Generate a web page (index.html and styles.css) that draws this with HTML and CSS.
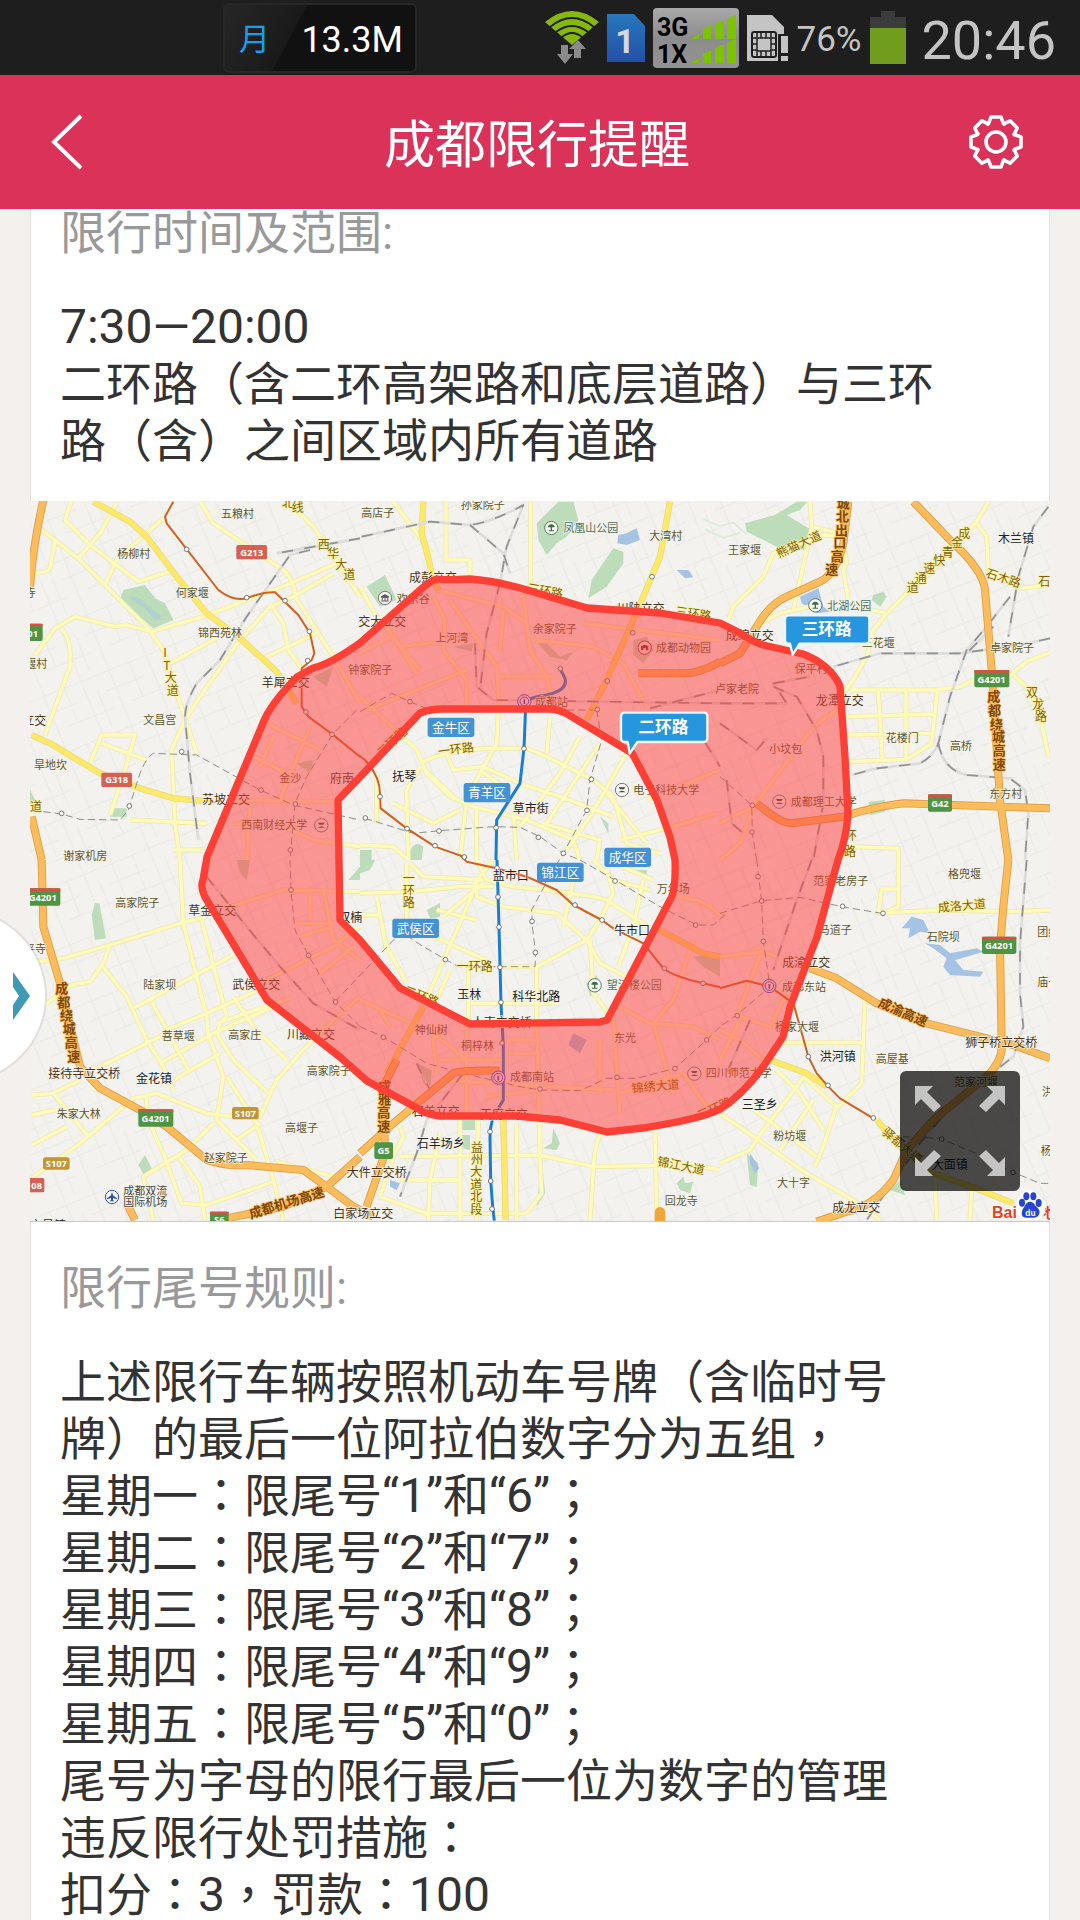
FILE: index.html
```html
<!DOCTYPE html>
<html lang="zh-CN">
<head>
<meta charset="utf-8">
<meta name="viewport" content="width=device-width, initial-scale=1">
<title>成都限行提醒</title>
<link rel="stylesheet" href="styles.css">
</head>
<body>
<div class="app">
  <div class="status">
    <div class="traffic"><span class="traffic-unit">月</span><span>13.3M</span></div>
    <div class="status-icons">
      <svg width="54" height="54" viewBox="0 0 54 54" aria-hidden="true">
        <path d="M27 34 L0 11 Q27 -11 54 11Z" fill="#86b80d"/>
        <g fill="none" stroke="#1e1e1e" stroke-width="2"><path d="M5 16Q27 -2 49 16M11 21Q27 9 43 21M17 26Q27 18 37 26"/></g>
        <path d="M16 34h7v9h5l-8 10-8-10h4zM29 47v-9h-5l9-9 8 9h-5v9z" fill="#8b8b8b"/>
      </svg>
      <svg width="38" height="50" viewBox="0 0 38 50" aria-hidden="true">
        <defs><linearGradient id="sim" x2="0" y2="1"><stop stop-color="#2777bb"/><stop offset="1" stop-color="#2450a8"/></linearGradient></defs>
        <path d="M0 1h27l11 12v36H0z" fill="url(#sim)"/>
        <text x="18" y="40" class="sim-no">1</text>
      </svg>
      <svg width="86" height="60" viewBox="0 0 86 60" aria-hidden="true">
        <defs><linearGradient id="sig" x2="0" y2="1"><stop stop-color="#a9a9a9"/><stop offset=".5" stop-color="#8c8c8c"/><stop offset="1" stop-color="#939393"/></linearGradient></defs>
        <rect width="86" height="60" rx="4" fill="url(#sig)"/>
        <text x="4" y="28" class="net">3G</text><text x="4" y="55" class="net">1X</text>
        <path d="M38 31l8-5v5zM50 31v-10l8-4v14zM62 31V16l9-4v19zM74 31V11l9-4v24zM38 55l8-5v5zM50 55v-9l8-4v13zM62 55V40l9-4v19zM74 55V35l9-4v24z" fill="#7cc400"/>
      </svg>
      <svg width="42" height="48" viewBox="0 0 42 48" aria-hidden="true">
        <path d="M0 1h25l12 12v7h-6v27H0z" fill="#c4c4c4"/>
        <rect x="5" y="18" width="24" height="25" rx="2" fill="#c4c4c4" stroke="#1e1e1e" stroke-width="2"/>
        <path d="M10 18v25M24 18v25M5 24h5M5 30h5M5 36h5M24 24h5M24 30h5M24 36h5M10 24h14M10 37h14M14 18v6M19 18v6M14 37v6M19 37v6" stroke="#1e1e1e" stroke-width="1.5" fill="none"/>
        <path d="M34 22h7v17h-7zM34 42h7v5h-7z" fill="#c4c4c4"/>
      </svg>
      <span class="percent">76%</span>
      <svg width="36" height="53" viewBox="0 0 36 53" aria-hidden="true"><path d="M0 6h11V0h14v6h11v12H0z" fill="#3b3b3b"/><path d="M0 17h36v36H0z" fill="#709d1d"/></svg>
      <time class="clock">20:46</time>
    </div>
  </div>

  <header class="bar">
    <button class="bar-btn" aria-label="返回"><svg width="34" height="58" viewBox="0 0 34 58"><path d="M31 3 4 29l27 26" fill="none" stroke="#fff" stroke-width="4"/></svg></button>
    <h1>成都限行提醒</h1>
    <button class="bar-btn bar-right" aria-label="设置"><svg width="56" height="56" viewBox="-28 -28 56 56"><g fill="none" stroke="#fff" stroke-width="3.6" stroke-linejoin="round"><path d="M-7-19.5-5-25H5L7-19.5Q8-16.500 8.800-18.700L14.100-21.200 21.200-14.100 18.700-8.800Q17-7 19.500-7L25-5V5L19.500 7Q17 8 18.700 8.800L21.200 14.100 14.100 21.200 8.800 18.700Q8 16.500 7 19.500L5 25H-5L-7 19.500Q-8 16.500-8.800 18.700L-14.100 21.200-21.200 14.100-18.700 8.800Q-17 7-19.500 7L-25 5V-5L-19.500-7Q-17-8-18.700-8.800L-21.200-14.100-14.100-21.200-8.800-18.700Q-8-16.500-7-19.500Z"/><circle r="10"/></g></svg></button>
  </header>

  <main class="scroll">
    <article class="card">
      <section class="block">
        <h2>限行时间及范围:</h2>
        <p><span class="num">7:30—20:00</span><br>二环路（含二环高架路和底层道路）与三环<br>路（含）之间区域内所有道路</p>
      </section>

      <figure class="map">
        <svg class="map-art" viewBox="0 0 3060 2160" role="img" aria-label="成都限行区域地图">
          <defs>
            <pattern id="streets" width="210" height="180" patternUnits="userSpaceOnUse" patternTransform="rotate(-22)">
              <path d="M0 20H210M0 75H120M60 130H210M30 0V180M95 20V130M150 0V180M185 60V180" fill="none" stroke="#ebebe8" stroke-width="4"/>
            </pattern>
            <g id="minor">
              <g transform="translate(-90 -33)"><path d="M120 115L240 210 440 410 490 480 530 610 590 790M215 30L195 90 270 165 415 275 510 245M350 40L300 130 235 205M490 85L350 210 315 285M165 155L150 235Q145 250 95 250M105 495L165 415 225 380 345 410 380 405 455 425 610 380 860 285 1010 220M185 420Q215 440 210 530L135 735M600 35L640 100 850 240Q885 270 885 320L1000 500 1080 640M890 60L940 110 1080 320M510 520L650 445M1000 250L880 320 810 350 720 450 600 620 555 690 515 780 525 1000 540 1110M790 505L950 430M810 340L850 400 865 480 905 535M270 820L305 735H405L375 840 330 975M305 760L440 810M390 990L620 1000M520 1080H610M800 700L960 780M930 710L840 930M760 800L860 850M820 740L780 830M690 930L1000 935M700 1000L850 1010 940 1050 1080 1070M750 950L740 1110"/></g>
              <g transform="translate(990 -33)"><path d="M0 290L50 380 180 540M100 35L215 190M258 35V210H330V260M512 35V290M230 300L430 350 500 400M490 310L500 400 510 480 560 560 580 650M430 360L420 480M220 320L255 390 250 480 320 570V650M270 330L310 390 410 530 418 650M120 470L250 455M60 380L170 550M0 490L110 430M415 560H580M520 450L700 470 790 520 860 650M670 400L1080 450M20 660L320 540M180 820Q250 780 400 775H500L560 800 700 870 760 920 800 1060M0 620L170 780 200 850 270 920 340 950 500 990 640 1050 660 1110M415 660L410 760 370 830 320 930 300 1110M180 830L140 900 145 1110M260 790L280 840 370 830 480 880 600 920 760 980M570 680L560 790M660 740L600 850 480 1010M720 760L640 880 560 1000M800 790L690 980 620 1080M360 840L440 900M460 960L470 1110M740 910L860 1060M350 950V1110M0 1065L100 1070 145 1110M100 940L220 1000 300 960M780 1050L940 1010 1070 970M860 930L1080 840M550 1000L720 1050 710 1110M800 1060L900 1090M185 830L290 930M50 860V1000"/></g>
              <g transform="translate(2070 -33)"><path d="M270 35L275 110 380 135M25 390L40 350 130 260 160 190 210 170 310 135 380 140M275 115L220 360M370 150L380 220 370 240 385 330M100 410L180 370 270 350M385 345L500 370 460 420 440 500 400 570 370 610M500 370L560 310 640 240 710 160 770 95 805 35M770 100L800 140 805 240 900 295 990 285M390 600H650L720 590 760 570M475 605L487 810M558 600V805M652 600L635 760 560 808 390 815M380 680L640 672M380 735L635 730M870 555L920 515 990 488M880 555L930 600 960 670 985 800M400 1070L535 1075V1110M365 650L280 710 100 950 0 1000M0 1110L60 1060 100 950"/></g>
              <g transform="translate(-90 1077)"><path d="M115 305L190 295 330 255 540 190 620 170M140 430L215 375 270 365 310 310 330 255M305 315L380 410 440 540 490 620 520 690M540 0L550 190 620 470 625 520 670 650 650 780 770 900M605 180L680 470M400 445L700 285M455 425L565 630M500 510L620 460 800 380M650 490L870 415M480 610L640 520 820 440M230 640L300 620 440 550 500 520M520 660L660 580M700 410L760 500 860 600M680 470Q650 490 655 530L700 600 810 705M95 705L160 700 240 660M95 765L165 750M160 700L265 830M95 855L200 800M100 950L240 850 400 715 470 700 620 760 700 770H780L830 660 900 580 1000 480 1080 410M440 700V770L490 880 545 1030 620 1035 820 965M530 880L600 980 615 1080M640 790L560 870 430 950 460 1080M680 650L770 790 820 960 850 1080M710 840L780 790M830 905L1000 950M690 140L850 90 1080 95M800 360L1000 260 1080 200M930 90V180M970 90L1000 240M890 190H1000M1000 240L1080 300M900 230L1000 200M960 340L1060 260"/></g>
              <g transform="translate(990 1077)"><path d="M0 100L150 95 300 80 400 80M140 10V180M150 10L190 50 370 60M400 0L350 60 330 120 190 440M0 165H60L80 260 140 370M50 110L80 270M250 170L370 70M180 210L290 260 380 300M230 150L350 180M350 0L380 60 460 80 560 90 700 110 740 120 880 210M350 60V110L430 140 590 160 680 240 720 310 800 350M740 20L760 100 720 180 680 240 530 320H430M700 0L760 60 870 90M740 0L880 60M850 60L820 200 775 320M690 240L700 400 760 480 780 760M640 60L610 200M530 320V480L540 870M330 430H600M325 320V490M270 330L230 420M215 500L230 640M320 500V760M440 540H540M440 580H540M240 600H440M240 660L760 690M780 700L970 640 1040 740M880 490L940 700M760 430L870 490 1000 500 1080 540M1000 240L940 420 880 490M950 110Q1050 120 1080 170M720 700V540M0 420L220 520 320 600M60 450L90 500M120 890L540 885 700 920 1000 915 1080 930M720 820Q700 880 700 930L690 1080M885 815L890 1050M240 820L210 960 205 1080M300 780V1080M355 780L350 1080M470 790V1080M540 780V900L545 1000 500 1060M60 1010L200 1060H500M120 800L130 830 100 890 60 1010M380 710L540 690M120 960H300"/></g>
              <g transform="translate(2070 1077)"><path d="M535 0V140L500 155M530 87H485L475 160 660 150 880 155 990 150M435 420L425 670 345 750 310 860 285 920M190 548H435M0 760L260 940 400 1020 480 1080M0 910L90 870 130 810 200 720 260 640M90 740L290 890M170 630L240 700 310 810M250 650L350 740M180 870L280 720M645 950L650 1080M755 980L750 1080M0 510L60 540 130 600M130 260L50 470M0 290L130 275 200 300M60 470L150 500 200 400M0 600L60 480"/></g>
            </g>
            <g id="major">
              <g transform="translate(-90 -33)"><path d="M280 35L390 95 440 140 530 260 620 370 720 445 830 545 890 640M95 735L150 760 300 850 420 895 520 925 640 935"/></g>
              <g transform="translate(990 -33)"><path d="M190 35L185 130Q205 200 215 250L235 300M930 35L900 200 820 390 740 570 680 690"/></g>
              <g transform="translate(990 1077)"><path d="M430 780L437 1080M190 440L80 640M880 200L1030 280 1080 290"/></g>
              <g transform="translate(2070 1077)"><path d="M150 600L260 640 320 680M470 780L560 880 640 940 780 990 880 1030"/></g>
            </g>
            <g id="highway">
              <g transform="translate(-90 -33)"><path d="M130 30Q100 160 90 290M95 980L125 1110"/></g>
              <g transform="translate(990 -33)"><path d="M835 550H990Q1040 540 1080 515"/></g>
              <g transform="translate(2070 -33)"><path d="M385 35L370 160Q350 250 300 275L200 320Q150 340 110 410L60 490 0 520M580 35L690 150Q790 240 795 300L815 540 840 930 865 1110M110 940Q180 1000 215 1000L370 980Q460 950 550 940L990 955"/></g>
              <g transform="translate(-90 1077)"><path d="M125 0L130 200 180 370 240 620 300 685 420 750 500 800 620 900Q680 920 740 915L910 930 980 980 1060 1040 1120 1070M1080 890L980 980 850 1040 680 1075M385 1040L405 1080"/></g>
              <g transform="translate(990 1077)"><path d="M0 880L100 790 280 640Q300 630 420 632M110 600L70 680 75 880 20 1040"/></g>
              <g transform="translate(2070 1077)"><path d="M865 0L850 140 840 260 845 550Q850 600 800 650L640 780 560 870 520 960Q460 1040 380 1055L290 1085M270 325L350 355 470 430 620 490 740 520 880 555 990 595"/></g>
            </g>
            <g id="rail">
              <g transform="translate(-90 -33)"><path d="M1080 145L830 190M930 180L870 195 740 380 660 510 590 580Q555 640 555 680L570 850 595 1050"/></g>
              <g transform="translate(990 -33)"><path d="M5 140L210 95 330 105Q400 95 490 45L440 170 420 280 380 430 360 600M330 105L430 190 450 250M345 460L350 590 400 630 1080 640M870 655L1080 600M1000 700L1080 830"/></g>
              <g transform="translate(2070 -33)"><path d="M990 445L900 465 720 490H480L340 530M985 50L940 110 895 260 865 440M870 320L800 410 740 480 690 620 655 760Q640 800 600 820L470 835 395 855M655 760Q670 840 740 855L870 865 915 900 925 970 915 1110M820 410L740 490M0 640H200L160 580 270 560M0 700L110 780 140 745M160 590L230 620 290 720 310 800V940L280 1110M20 870L35 1000 70 1030"/></g>
              <g transform="translate(-90 1077)"><path d="M620 50L740 200 840 320 940 430 1080 510"/></g>
              <g transform="translate(990 1077)"><path d="M310 640L200 780 170 880 120 1010M170 610L210 690"/></g>
              <g transform="translate(2070 1077)"><path d="M920 0L900 250V400L910 500 880 590 700 730 600 850 440 1080M275 0L230 120 160 330M90 480L20 640"/></g>
            </g>
            <g id="planned">
              <g transform="translate(-90 -33)"><path d="M130 965L185 972 240 988 360 990 385 960 420 850Q440 800 460 790L590 795 780 900 880 945 1080 990M1070 660L1000 730 920 860 885 940 870 1110"/></g>
              <g transform="translate(990 -33)"><path d="M0 665L95 610 150 635 210 660H700M15 985L160 1030 240 1022 400 1010 480 1012 540 1040 610 1090 660 1110M710 660L725 750 690 870 680 960 610 1090 555 1180"/></g>
              <g transform="translate(2070 -33)"><path d="M0 860L95 945 97 1030 110 1110"/></g>
              <g transform="translate(-90 1077)"><path d="M870 0L873 90 885 210 925 285 1005 425 1080 500M1005 425L1190 230"/></g>
              <g transform="translate(990 1077)"><path d="M555 75L515 150 517 200 527 280 525 320H295L190 260 130 220M660 0L765 60 900 140 1010 195H1060L1100 160M0 500L70 530 200 610 310 640 480 680 540 690 660 692 740 655H830L945 625 1040 540 1080 500"/></g>
              <g transform="translate(2070 1077)"><path d="M110 0L125 125 130 245 150 380 50 465 0 500M0 160L125 122 240 112 365 140 485 160M550 830L660 835 780 885 880 937 960 970H990"/></g>
            </g>
            <path id="ring3" d="M1221 234Q1245 238 1320 234Q1400 240 1491 267L1671 321 1890 336 2070 366 2130 396Q2160 418 2199 432L2319 459Q2400 490 2430 555L2445 768 2454 936Q2450 1010 2424 1077L2361 1308 2280 1518 2259 1608 2199 1698Q2140 1780 2070 1825Q2010 1855 1839 1881L1731 1893 1590 1857 1461 1845H1230Q1180 1838 1161 1821L1011 1740 930 1668 711 1497 525 1188Q510 1155 519 1137L531 1068 699 666Q720 610 801 528L849 501Q900 490 990 426L1170 267Q1200 240 1221 234Z"/>
            <path id="ring2" d="M924 897L990 828 1170 636Q1200 624 1239 624H1560Q1590 626 1611 639L1806 756 1881 897 1920 1008 1935 1077Q1938 1170 1920 1197L1731 1557 1710 1563 1320 1569 1110 1461 990 1317 930 1257Z"/>
          </defs>

          <rect width="3060" height="2160" fill="#f3f2ee"/>
          <rect width="3060" height="2160" fill="url(#streets)"/>

          <g class="park">
            <path transform="translate(-90 -33)" d="M370 300L435 285 465 325 495 340 520 390 460 415 360 330ZM330 955H380V980H330ZM90 900L110 940H90ZM940 560L1000 530 980 590ZM890 820L940 810 930 850Z"/>
            <path transform="translate(990 -33)" d="M595 35H640L655 90 620 140 590 160 560 195 535 150 530 100ZM760 175L790 185V220L740 290 685 325 695 270ZM20 290L75 255 110 330 60 350ZM720 980L745 1000V1030ZM0 1080H35V1110H0ZM150 1080Q170 1050 190 1070L185 1110H150ZM820 450L860 440 880 480 850 520 820 495ZM280 470L340 460 335 485ZM525 450L560 460 600 500 640 485 620 510 570 500Z"/>
            <path transform="translate(2070 -33)" d="M165 75L230 35H262L240 60 200 75 290 130V150L250 180 170 170 80 125 75 100ZM460 315L490 305 500 320 480 350 455 330ZM445 935L495 930V965L450 975Z"/>
            <path transform="translate(-90 1077)" d="M285 130H298L318 235 285 240 275 165ZM415 915L435 885 455 925 435 950ZM1045 60L1080 20V60ZM710 0H750L740 60 720 40Z"/>
            <path transform="translate(990 1077)" d="M580 805L600 850 590 870 550 865 575 850ZM300 780H345V810H295ZM300 825H330V870L290 860ZM545 900L555 1000 530 1040ZM950 970L970 950 975 970 1000 965 990 1000 960 990ZM200 150L240 130V170L210 175ZM680 370L710 345 720 390 690 410ZM820 30H860V55ZM0 0H45L30 30 0 40ZM170 610L215 630 210 690 190 670ZM1000 290L1080 280V350L1030 320Z"/>
            <path transform="translate(2070 1077)" d="M540 960L555 1005 510 990ZM80 880L115 910 110 980 90 975Z"/>
          </g>
          <path d="M2020 55L2070 75 2110 65 2150 100M2025 85L2080 110 2130 95" fill="none" stroke="#dcebd8" stroke-width="5"/>
          <g class="water">
            <path transform="translate(-90 -33)" d="M390 320Q420 318 440 345L480 375 485 385 465 392Q440 350 400 334Z" fill-opacity=".5"/>
            <path transform="translate(990 -33)" d="M775 135L800 130 830 115 840 150 800 165 772 160ZM950 240L985 240 1000 262 975 265Z"/>
            <path transform="translate(2070 -33)" d="M240 320L295 295 310 350 330 365 290 370 245 340Z"/>
            <path transform="translate(990 1077)" d="M90 960L120 970 110 990 90 980ZM640 520L680 540 660 580 625 555Z"/>
            <path transform="translate(2070 1077)" d="M575 170L610 180 630 220 600 215 565 235 570 205 545 205ZM615 250L660 255 690 280 770 265 790 275 740 290 705 300 730 330 790 335 780 350 690 345 670 320 680 295 640 265ZM90 880L118 925 105 940 90 910Z"/>
          </g>

          <use href="#minor" class="road minor-edge"/><use href="#minor" class="road minor-fill"/>
          <use href="#major" class="road major-edge"/><use href="#major" class="road major-fill"/>
          <use href="#rail" class="road rail-edge"/><use href="#rail" class="road rail-dash"/>
          <use href="#planned" class="road planned"/>
          <use href="#highway" class="road highway-edge"/><use href="#highway" class="road highway-fill"/>
          <path d="M1890 2134V2160" class="road stub"/>

          <g class="road metro">
            <path transform="translate(-90 -33)" d="M520 35L495 80 500 100 655 300Q700 335 740 325 790 305 825 307L895 375 930 430 943 490 935 510 905 535V650L925 680 1000 735 1080 800"/>
            <path transform="translate(990 -33)" d="M-5 795L15 810Q60 860 60 910L62 955 140 1015 225 1070 310 1100"/>
            <path transform="translate(990 1077)" d="M300 -15L320 5 410 25 500 50 590 90 640 135 725 180 760 205 850 250 910 325Q940 350 1030 370L1080 382"/>
            <path transform="translate(2070 1077)" d="M0 385L80 362 150 380 220 430 240 500 265 590 290 640 325 680 360 715 460 775"/>
          </g>
          <g class="road metro line1">
            <path transform="translate(990 -33)" d="M490 635Q520 620 560 615 625 600 615 565L600 535M497 650L492 775 480 880 410 990 408 1110"/>
            <path transform="translate(990 1077)" d="M411 0L417 200 423 430 430 560V720L415 745Q390 780 390 830L392 960 398 1040 403 1082"/>
          </g>
          <g class="station">
            <g transform="translate(-90 -33)"><circle cx="560" cy="178" r="7"/><circle cx="740" cy="323" r="7"/><circle cx="855" cy="332" r="7"/><circle cx="928" cy="424" r="7"/><circle cx="923" cy="512" r="7"/><circle cx="918" cy="666" r="7"/><circle cx="996" cy="733" r="7"/><circle cx="545" cy="785" r="7"/><circle cx="185" cy="970" r="7"/><circle cx="388" cy="948" r="7"/><circle cx="783" cy="900" r="7"/><circle cx="886" cy="942" r="7"/><circle cx="871" cy="1080" r="7"/></g>
            <g transform="translate(990 -33)"><circle cx="60" cy="920" r="7"/><circle cx="141" cy="1016" r="7"/><circle cx="225" cy="1067" r="7"/><circle cx="313" cy="1101" r="7"/><circle cx="492" cy="776" r="7"/><circle cx="408" cy="1013" r="7"/><circle cx="237" cy="1023" r="7"/><circle cx="16" cy="984" r="7"/><circle cx="150" cy="635" r="7"/><circle cx="601" cy="536" r="7"/><circle cx="712" cy="658" r="7"/><circle cx="694" cy="868" r="7"/><circle cx="681" cy="961" r="7"/><circle cx="610" cy="1090" r="7"/><circle cx="535" cy="1042" r="7"/><circle cx="876" cy="260" r="7"/><circle cx="818" cy="428" r="7"/><circle cx="742" cy="573" r="7"/></g>
            <g transform="translate(2070 -33)"><circle cx="97" cy="946" r="7"/><circle cx="96" cy="1026" r="7"/></g>
            <g transform="translate(-90 1077)"><circle cx="873" cy="90" r="7"/><circle cx="926" cy="286" r="7"/><circle cx="1007" cy="426" r="7"/></g>
            <g transform="translate(990 1077)"><circle cx="411" cy="24" r="7"/><circle cx="414" cy="111" r="7"/><circle cx="417" cy="201" r="7"/><circle cx="420" cy="322" r="7"/><circle cx="423" cy="427" r="7"/><circle cx="426" cy="549" r="7"/><circle cx="390" cy="815" r="7"/><circle cx="392" cy="963" r="7"/><circle cx="396" cy="1047" r="7"/><circle cx="256" cy="299" r="7"/><circle cx="516" cy="184" r="7"/><circle cx="526" cy="278" r="7"/><circle cx="645" cy="135" r="7"/><circle cx="726" cy="180" r="7"/><circle cx="765" cy="63" r="7"/><circle cx="1007" cy="195" r="7"/><circle cx="913" cy="325" r="7"/><circle cx="1029" cy="370" r="7"/><circle cx="1040" cy="540" r="7"/><circle cx="945" cy="626" r="7"/><circle cx="771" cy="652" r="7"/><circle cx="540" cy="687" r="7"/><circle cx="70" cy="532" r="7"/></g>
            <g transform="translate(2070 1077)"><circle cx="114" cy="50" r="7"/><circle cx="125" cy="123" r="7"/><circle cx="130" cy="244" r="7"/><circle cx="368" cy="139" r="7"/><circle cx="489" cy="160" r="7"/><circle cx="265" cy="590" r="7"/><circle cx="324" cy="676" r="7"/><circle cx="460" cy="774" r="7"/><circle cx="665" cy="837" r="7"/><circle cx="879" cy="937" r="7"/><circle cx="52" cy="467" r="7"/></g>
          </g>

          <g class="labels">
            <g transform="translate(-90 -33)">
              <text x="663" y="85">五粮村</text><text x="352" y="203">杨柳村</text><text x="527" y="320">何家堰</text><text x="594" y="441">锦西苑林</text><text x="430" y="701">文昌宫</text><text x="102" y="838">旱地坎</text><text x="76" y="533">堰村</text><text x="74" y="320">寺</text><text x="190" y="1111">谢家机房</text><text x="838" y="877">金沙</text><text x="724" y="1017">西南财经大学</text><text x="1045" y="551">钟家院子</text>
              <g class="cross"><text x="785" y="591">羊犀立交</text><text x="67" y="706">立交</text><text x="606" y="941">苏坡立交</text></g>
              <g class="way"><text x="845 875" y="50 66">北线</text><text x="953 982 1006 1030" y="176 204 236 267">西华大道</text><text x="490 490 494 500" y="500 540 577 616">IT大道</text><text x="90" y="964">道</text></g>
            </g>
            <g transform="translate(990 -33)">
              <text x="4" y="80">高店子</text><text x="302" y="56">孙家院子</text><text x="868" y="150">大湾村</text><text x="226" y="457">上河湾</text><text x="518" y="430">余家院子</text>
              <g class="green"><text x="610" y="125">凤凰山公园</text></g>
              <text x="110" y="338">欢乐谷</text><text x="888" y="486">成都动物园</text><text x="525" y="648">成都站</text><text x="820" y="912">电子科技大学</text>
              <g class="cross"><text x="147" y="277">成彭立交</text><text x="-5" y="409">交大立交</text><text x="770" y="370">川陕立交</text><text x="-90" y="880">府南</text></g>
              <g class="town"><text x="97" y="872">抚琴</text><text x="458" y="968">草市街</text></g>
              <g class="way"><text x="500" y="306" transform="rotate(10 500 306)">三环路</text><text x="945" y="376" transform="rotate(8 945 376)">三环路</text><text x="236" y="798" transform="rotate(-8 236 798)">一环路</text><text x="65" y="800" transform="rotate(-42 65 800)">二环路</text></g>
            </g>
            <g transform="translate(2070 -33)">
              <text x="24" y="191">王家堰</text><text x="425" y="470">三花堰</text><text x="810" y="485">卓家院子</text><text x="497" y="755">花楼门</text><text x="690" y="780">高桥</text><text x="808" y="923">东方村</text><text x="148" y="789">小坟包</text><text x="224" y="548">保平村</text><text x="-15" y="608">卢家老院</text><text x="212" y="948">成都理工大学</text>
              <g class="green"><text x="322" y="359">北湖公园</text></g>
              <g class="cross"><text x="17" y="450">成绵立交</text><text x="287" y="644">龙潭立交</text></g>
              <g class="town"><text x="834" y="160">木兰镇</text></g>
              <g class="way"><text x="176" y="204" transform="rotate(-24 176 204)">熊猫大道</text><text x="715 693 665 640 610 584 560" y="145 172 200 226 250 278 306">成金青快速通道</text><text x="795" y="260" transform="rotate(18 795 260)">石木路</text><text x="955" y="288">石</text><text x="918 937 945" y="622 656 694">双龙路</text><text x="374" y="1050">环</text><text x="372" y="1098">路</text></g>
              <g class="express"><text x="350 348 345 340 332 316" y="53 93 134 172 213 251">城北出口高速</text><text x="802 804 810 816 818 818" y="634 676 716 754 796 836">成都绕城高速</text></g>
            </g>
            <g transform="translate(-90 1077)">
              <text x="346" y="142">高家院子</text><text x="430" y="386">陆家坝</text><text x="485" y="540">菩草堰</text><text x="685" y="536">高家庄</text><text x="920" y="645">高家院子</text><text x="170" y="775">朱家大林</text><text x="855" y="816">高堰子</text><text x="611" y="907">赵家院子</text><text x="72" y="280">平寺</text>
              <g class="cross"><text x="565" y="164">草金立交</text><text x="697" y="386">武侯立交</text><text x="861" y="537">川藏立交</text><text x="145" y="655">接待寺立交桥</text><text x="1040" y="952">大件立交桥</text><text x="1000" y="1075">白家场立交</text></g>
              <g class="town"><text x="408" y="670">金花镇</text><text x="1015" y="187">双楠</text><text x="90" y="1110">文星镇</text></g>
              <g class="poi"><text x="370" y="1004">成都双流</text><text x="370" y="1038">国际机场</text></g>
              <g class="express"><text x="166 172 180 188 194 202" y="398 440 480 520 562 602">成都绕城高速</text><text x="752" y="1076" transform="rotate(-17 752 1076)">成都机场高速</text></g>
            </g>
            <g transform="translate(990 1077)">
              <text x="890" y="99">万年场</text><text x="164" y="523">神仙树</text><text x="303" y="571">桐梓林</text><text x="762" y="545">东光</text><text x="450" y="663">成都南站</text><text x="1037" y="652">四川师范大学</text><text x="914" y="1036">回龙寺</text>
              <g class="green"><text x="740" y="387">望江楼公园</text></g>
              <g class="cross"><text x="335" y="500">人南立交桥</text><text x="155" y="769">石羊立交</text><text x="360" y="777">天府立交</text></g>
              <g class="town"><text x="398" y="61">盐市口</text><text x="762" y="225">牛市口</text><text x="292" y="417">玉林</text><text x="457" y="424">科华北路</text><text x="170" y="864">石羊场乡</text></g>
              <g class="way"><text x="128 128 128" y="70 106 142">一环路</text><text x="290" y="332">一环路</text><text x="130" y="400" transform="rotate(22 130 400)">二环路</text><text x="816" y="698" transform="rotate(-5 816 698)">锦绣大道</text><text x="890" y="916" transform="rotate(11 890 916)">锦江大道</text><text x="333 333 331 331 331 331" y="876 912 948 986 1024 1061">益州大道北段</text><text x="1020" y="780" transform="rotate(-25 1020 780)">三环路</text></g>
              <g class="express"><text x="54 54 52 52" y="694 732 772 814">成雅高速</text></g>
            </g>
            <g transform="translate(2070 1077)">
              <text x="280" y="76">范家老房子</text><text x="684" y="54">格兜堰</text><text x="296" y="223">马道子</text><text x="620" y="244">石院坝</text><text x="952" y="229">团结</text><text x="952" y="379">庙子</text><text x="966" y="709">洪</text><text x="962" y="884">杨</text><text x="165" y="513">杨家大堰</text><text x="467" y="609">高屋基</text><text x="702" y="677">范家河堰</text><text x="160" y="840">粉坊堰</text><text x="171" y="980">大十字</text><text x="186" y="392">成都东站</text>
              <g class="cross"><text x="187" y="321">成渝立交</text><text x="736" y="561">狮子桥立交桥</text><text x="337" y="1055">成龙立交</text></g>
              <g class="town"><text x="299" y="604">洪河镇</text><text x="65" y="748">三圣乡</text><text x="635" y="926">大面镇</text></g>
              <g class="way"><text x="655" y="156" transform="rotate(-5 655 156)">成洛大道</text><text x="484" y="820" transform="rotate(40 484 820)">驿都大道</text></g>
              <g class="express"><text x="472" y="438" transform="rotate(24 472 438)">成渝高速</text></g>
            </g>
          </g>

          <g class="pins">
            <g transform="translate(1564 81)"><circle r="20" stroke="#57805c"/><path d="M-10-2Q-10-10 0-11 10-10 10-2H2V7H8V10H-8V7H-2V-2Z" fill="#3f6e45"/></g>
            <g transform="translate(1065 291)"><circle r="20"/><path d="M-11-4 0-10 11-4V-2H-11ZM-8 0V8M0 0V8M8 0V8M-11 9H11" fill="#555" stroke="#555" stroke-width="3"/></g>
            <g transform="translate(2356 313)"><circle r="20" stroke="#57805c"/><path d="M-10-2Q-10-10 0-11 10-10 10-2H2V7H8V10H-8V7H-2V-2Z" fill="#3f6e45"/></g>
            <g transform="translate(1694 1453)"><circle r="20" stroke="#57805c"/><path d="M-10-2Q-10-10 0-11 10-10 10-2H2V7H8V10H-8V7H-2V-2Z" fill="#3f6e45"/></g>
            <g transform="translate(1776 867)"><circle r="20"/><path d="M-10-8H10L6-2H-6ZM-11 7Q0-2 11 7Z" fill="#444"/></g>
            <g transform="translate(874 973)"><circle r="20"/><path d="M-10-8H10L6-2H-6ZM-11 7Q0-2 11 7Z" fill="#444"/></g>
            <g transform="translate(2248 902)"><circle r="20"/><path d="M-10-8H10L6-2H-6ZM-11 7Q0-2 11 7Z" fill="#444"/></g>
            <g transform="translate(1993 1718)"><circle r="20"/><path d="M-10-8H10L6-2H-6ZM-11 7Q0-2 11 7Z" fill="#444"/></g>
            <g transform="translate(1844 440)"><circle r="20" stroke="#a03030"/><path d="M-11 8V-4Q0-14 11-4V8H4V2H-4V8Z" fill="#a02020"/></g>
            <g transform="translate(1483 601)"><circle r="20" stroke="#2f46d8"/><circle r="13" stroke="#2f46d8"/><path d="M0-6V8" stroke="#2f46d8" stroke-width="5"/></g>
            <g transform="translate(1405 1730)"><circle r="20" stroke="#2f46d8"/><circle r="13" stroke="#2f46d8"/><path d="M0-6V8" stroke="#2f46d8" stroke-width="5"/></g>
            <g transform="translate(2218 1455)"><circle r="20" stroke="#2f46d8"/><circle r="13" stroke="#2f46d8"/><path d="M0-6V8" stroke="#2f46d8" stroke-width="5"/></g>
            <g transform="translate(246 2088)"><circle r="20" stroke="#2f4fae"/><path d="M0-15 3-5 15 4V7L3 3V9L7 13H-7L-3 9V3L-15 7V4L-3-5Z" fill="#2f4fae"/></g>
          </g>

          <path fill="#ff4040" fill-opacity=".52" fill-rule="evenodd" d="M1221 234Q1245 238 1320 234Q1400 240 1491 267L1671 321 1890 336 2070 366 2130 396Q2160 418 2199 432L2319 459Q2400 490 2430 555L2445 768 2454 936Q2450 1010 2424 1077L2361 1308 2280 1518 2259 1608 2199 1698Q2140 1780 2070 1825Q2010 1855 1839 1881L1731 1893 1590 1857 1461 1845H1230Q1180 1838 1161 1821L1011 1740 930 1668 711 1497 525 1188Q510 1155 519 1137L531 1068 699 666Q720 610 801 528L849 501Q900 490 990 426L1170 267Q1200 240 1221 234ZM924 897L990 828 1170 636Q1200 624 1239 624H1560Q1590 626 1611 639L1806 756 1881 897 1920 1008 1935 1077Q1938 1170 1920 1197L1731 1557 1710 1563 1320 1569 1110 1461 990 1317 930 1257Z"/>
          <use href="#ring3" class="ring"/><use href="#ring2" class="ring"/>

          <g class="district">
            <rect x="1193" y="650" width="140" height="58" rx="8"/><text x="1263" y="692">金牛区</text>
            <rect x="1301" y="846" width="140" height="58" rx="8"/><text x="1371" y="888">青羊区</text>
            <rect x="1723" y="1040" width="140" height="58" rx="8"/><text x="1793" y="1082">成华区</text>
            <rect x="1521" y="1085" width="140" height="58" rx="8"/><text x="1591" y="1127">锦江区</text>
            <rect x="1087" y="1253" width="140" height="58" rx="8"/><text x="1157" y="1295">武侯区</text>
          </g>

          <g class="shield">
            <rect x="619" y="132" width="92" height="43" rx="5" class="s-red"/><text x="665" y="164">G213</text>
            <rect x="214" y="815" width="92" height="43" rx="5" class="s-red"/><text x="260" y="847">G318</text>
            <rect x="-40" y="2031" width="83" height="43" rx="5" class="s-red"/><text x="12" y="2063">108</text>
            <rect x="-60" y="368" width="98" height="52" rx="6" class="s-green"/><path d="M-60 376v-8h98v8z"/><text x="-8" y="407">4201</text>
            <rect x="-14" y="1162" width="105" height="52" rx="6" class="s-green"/><path d="M-14 1170v-8H91v8z"/><text x="38" y="1199">G4201</text>
            <rect x="325" y="1825" width="105" height="52" rx="6" class="s-green"/><path d="M325 1833v-8h105v8z"/><text x="377" y="1863">G4201</text>
            <rect x="2833" y="507" width="105" height="52" rx="6" class="s-green"/><path d="M2833 515v-8h105v8z"/><text x="2885" y="545">G4201</text>
            <rect x="2694" y="880" width="72" height="52" rx="6" class="s-green"/><path d="M2694 888v-8h72v8z"/><text x="2730" y="918">G42</text>
            <rect x="2856" y="1307" width="103" height="52" rx="6" class="s-green"/><path d="M2856 1315v-8h103v8z"/><text x="2907" y="1345">G4201</text>
            <rect x="1033" y="1924" width="56" height="50" rx="6" class="s-green"/><text x="1061" y="1960">G5</text>
            <rect x="540" y="2132" width="56" height="50" rx="6" class="s-green"/><path d="M540 2140v-8h56v8z"/><text x="568" y="2166">S6</text>
            <rect x="606" y="1818" width="80" height="37" rx="8" class="s-brown"/><text x="646" y="1847">S107</text>
            <rect x="39" y="1969" width="80" height="37" rx="8" class="s-brown"/><text x="79" y="1998">S107</text>
          </g>

          <g class="callout">
            <path d="M1783 635h238q11 0 11 11v66q0 11-11 11H1822L1799 758 1793 723H1783q-10 0-10-11v-66q0-11 10-11z"/><text x="1900" y="697">二环路</text>
            <path d="M2275 343h232q11 0 11 11v63q0 11-11 11H2309L2288 461 2280 428H2275q-10 0-10-11v-63q0-11 10-11z"/><text x="2390" y="402">三环路</text>
          </g>

          <g class="baidu">
            <text x="2886" y="2150">Bai</text><text x="3030" y="2150">地图</text>
            <path d="M2967 2090q30-40 60 0l15 20q5 40-22 43h-36q-26-5-20-40z" fill="#fff"/>
            <g fill="#2545d2" stroke="none"><ellipse cx="2976" cy="2105" rx="9" ry="12"/><ellipse cx="2989" cy="2086" rx="9" ry="12"/><ellipse cx="3010" cy="2086" rx="9" ry="12"/><ellipse cx="3026" cy="2106" rx="9" ry="12"/><path d="M3000 2102Q3010 2102 3017 2115 3032 2127 3028 2138 3024 2150 3010 2150H2990Q2976 2150 2975 2138 2974 2127 2983 2117 2990 2102 3000 2102Z"/></g>
            <text x="2986" y="2145" class="du">du</text>
          </g>
        </svg>
        <button class="expand" aria-label="全屏查看地图"><svg viewBox="0 0 120 120"><path d="M15 15h18l-6 6 14 14-7 6-13-13-6 6zM105 15H87l6 6-14 14 7 6 13-13 6 6zM15 105h18l-6-6 14-14-7-6-13 13-6-6zM105 105H87l6-6-14-14 7-6 13 13 6-6z" fill="#c4c4c4"/></svg></button>
      </figure>

      <section class="block block-rules">
        <h2>限行尾号规则:</h2>
        <p>上述限行车辆按照机动车号牌（含临时号<br>牌）的最后一位阿拉伯数字分为五组<span class="mid" lang="zh-Hant">，</span><br>
星期一<span class="mid" lang="zh-Hant">：</span>限尾号<span class="num">“1”</span>和<span class="num">“6”</span><span class="mid" lang="zh-Hant">；</span><br>
星期二<span class="mid" lang="zh-Hant">：</span>限尾号<span class="num">“2”</span>和<span class="num">“7”</span><span class="mid" lang="zh-Hant">；</span><br>
星期三<span class="mid" lang="zh-Hant">：</span>限尾号<span class="num">“3”</span>和<span class="num">“8”</span><span class="mid" lang="zh-Hant">；</span><br>
星期四<span class="mid" lang="zh-Hant">：</span>限尾号<span class="num">“4”</span>和<span class="num">“9”</span><span class="mid" lang="zh-Hant">；</span><br>
星期五<span class="mid" lang="zh-Hant">：</span>限尾号<span class="num">“5”</span>和<span class="num">“0”</span><span class="mid" lang="zh-Hant">；</span><br>
尾号为字母的限行最后一位为数字的管理<br>
违反限行处罚措施<span class="mid" lang="zh-Hant">：</span><br>
扣分<span class="mid" lang="zh-Hant">：</span><span class="num">3</span><span class="mid" lang="zh-Hant">，</span>罚款<span class="mid" lang="zh-Hant">：</span><span class="num">100</span></p>
      </section>
    </article>
  </main>

  <button class="drawer" aria-label="展开侧栏"><svg width="50" height="160" viewBox="0 0 50 160"><circle cx="-40" cy="80" r="87" fill="#000" fill-opacity=".08"/><circle cx="-40" cy="80" r="85" fill="#fff"/><path d="M13 56 30 80 13 104V89l6-9-6-9z" fill="#3f9ab5"/></svg></button>
</div>
</body>
</html>
```
FILE: styles.css
```css
* { box-sizing: border-box; }
body { margin: 0; font-family: Roboto, "Noto Sans CJK SC", sans-serif; color: #333; background: #f4f0ed; }
button { padding: 0; border: 0; background: none; cursor: pointer; }
svg { display: block; }
h1, h2, p, figure { margin: 0; font-weight: 400; }

.app { height: 100vh; display: flex; flex-direction: column; overflow: hidden; }

/* system status bar */
.status { flex: none; height: 75px; padding: 0 24px 0 223px; display: flex; align-items: center; justify-content: space-between; background: #1e1e1e; color: #c4c4c4; }
.traffic { width: 194px; height: 70px; padding: 4px 12px 0 14px; display: flex; align-items: center; justify-content: space-between; border: 2px solid #272727; border-radius: 6px; background: linear-gradient(118deg, #262626 0, #1a1a1a 36%, #111 37%); color: #fff; font-size: 36px; line-height: 44px; }
.traffic-unit { color: #11a0f5; font-size: 31px; }
.status-icons { display: flex; align-items: center; gap: 8px; }
.percent { padding-top: 4px; font-size: 35px; }
.clock { margin-left: 8px; padding-top: 6px; font-size: 54px; line-height: 64px; }
.sim-no { font: 700 34px Roboto, sans-serif; fill: #d4d8e0; text-anchor: middle; }
.net { font: 700 25px Roboto, sans-serif; fill: #000; }

/* title bar */
.bar { flex: none; height: 134px; padding: 0 56px 0 50px; display: grid; grid-template-columns: 1fr auto 1fr; align-items: center; background: #db3259; color: #fff; }
.bar h1 { padding-top: 8px; font-size: 51px; line-height: 60px; }
.bar-btn { justify-self: start; }
.bar-right { justify-self: end; }

/* content */
.scroll { flex: 1; min-height: 0; padding: 0 30px; overflow-y: auto; scrollbar-width: none; }
.card { background: #fff; border: solid #e4e0dd; border-width: 0 1px; }
.block { padding: 1px 29px 31px; }
.block-rules { padding-top: 43px; padding-bottom: 0; }
.block h2 { margin-bottom: 43px; color: #999; font-size: 46px; line-height: 46px; }
.block p { font-size: 46px; line-height: 57px; white-space: nowrap; }
.num { font-size: 48px; line-height: 1; }
.mid { font-family: "Noto Sans CJK TC", sans-serif; line-height: 1; }

/* map */
.map { position: relative; margin: 0 -1px; border-bottom: 1px solid #c9c9c9; }
.map-art { width: 100%; height: auto; }
.expand { position: absolute; right: 30px; bottom: 30px; width: 120px; height: 120px; border-radius: 6px; background: rgba(0, 0, 0, .7); }

.road { fill: none; stroke-linejoin: round; }
.minor-edge { stroke: #efe9b4; stroke-width: 15px; }
.minor-fill { stroke: #fefabc; stroke-width: 10px; }
.major-edge { stroke: #ecd67a; stroke-width: 19px; }
.major-fill { stroke: #fde968; stroke-width: 15px; }
.highway-edge { stroke: #dc9d48; stroke-width: 24px; }
.highway-fill { stroke: #fcbc5b; stroke-width: 19px; }
.stub { stroke: #f0a53d; stroke-width: 32px; stroke-linecap: round; }
.rail-edge { stroke: #dcdcdc; stroke-width: 8px; }
.rail-dash { stroke: #919191; stroke-width: 5px; stroke-dasharray: 34 34; }
.planned { stroke: #8f8f8b; stroke-width: 3px; stroke-dasharray: 22 12; }
.metro { stroke: #d2601f; stroke-width: 6px; }
.line1 { stroke: #1c7cd2; stroke-width: 9px; }
.station { fill: #fff; stroke: #777; stroke-width: 3px; }
.park { fill: #bcdcba; }
.water { fill: #a5c3e4; }
.ring { fill: none; stroke: #fd3f36; stroke-width: 22px; stroke-linejoin: round; }

.labels { font-family: "Noto Sans CJK SC", sans-serif; font-size: 33px; fill: #5e5426; stroke: #f6f5f0; stroke-width: 4px; paint-order: stroke; }
.green { fill: #4d7053; }
.poi { fill: #444; }
.cross { font-size: 36px; fill: #4c3110; }
.town { font-size: 36px; fill: #222; }
.way { font-size: 36px; fill: #80600f; stroke: #fdf3a0; }
.express { font-size: 39px; font-weight: 700; fill: #804806; stroke: #fcbc5b; }
.pins { fill: #f7f6f2; stroke: none; }
.pins circle { stroke-width: 3px; }
.pins circle:not([stroke]) { stroke: #777; }
.district { font: 38px "Noto Sans CJK SC", sans-serif; fill: #4591d6; text-anchor: middle; }
.district text { fill: #fff; }
.shield { font: 700 28px "Open Sans", sans-serif; fill: #d65045; text-anchor: middle; }
.shield text { fill: #fff; }
.s-red { fill: #d95f53; }
.s-green { fill: #4f9443; }
.s-brown { fill: #c39537; }
.callout { font: 700 50px "Noto Sans CJK SC", sans-serif; fill: #2696de; text-anchor: middle; }
.callout path { stroke: #eef6fb; stroke-width: 7px; stroke-linejoin: round; }
.callout text { fill: #fff; }
.baidu { font: 700 48px "Liberation Sans", "Noto Sans CJK SC", sans-serif; fill: #e0431f; stroke: #fff; stroke-width: 6px; paint-order: stroke; }
.baidu .du { font-size: 25px; fill: #fff; stroke: none; }

/* side drawer handle */
.drawer { position: fixed; left: 0; top: 916px; }
```
